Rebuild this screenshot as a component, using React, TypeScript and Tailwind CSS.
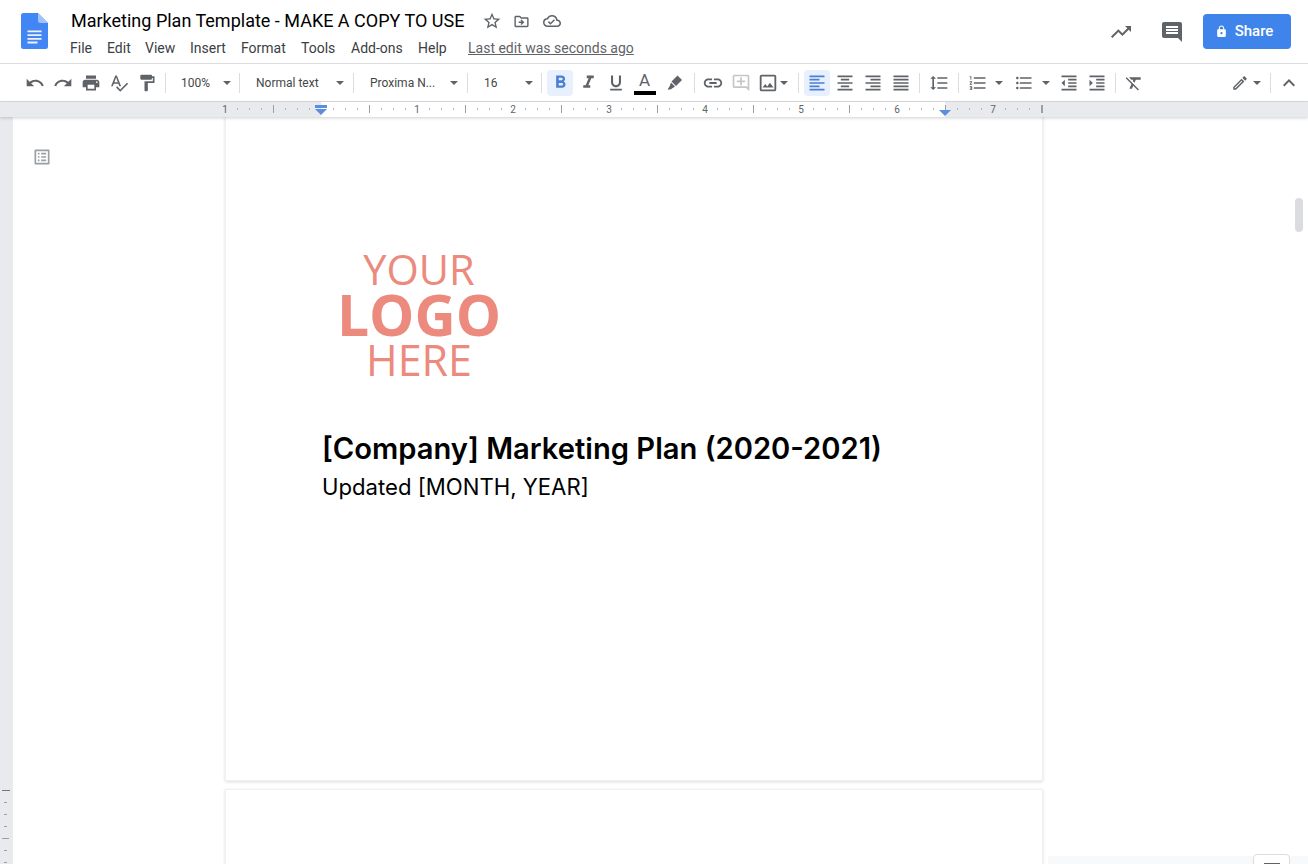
import React from "react";
import {
  MdUndo, MdRedo, MdPrint, MdSpellcheck, MdFormatPaint, MdFormatBold, MdFormatItalic, MdFormatUnderlined,
  MdLink, MdOutlineAddComment, MdOutlineImage, MdFormatAlignLeft, MdFormatAlignCenter, MdFormatAlignRight,
  MdFormatAlignJustify, MdFormatLineSpacing, MdFormatListNumbered, MdFormatListBulleted, MdFormatIndentDecrease,
  MdFormatIndentIncrease, MdFormatClear, MdOutlineEdit, MdKeyboardArrowUp, MdStarBorder, MdOutlineDriveFileMove,
  MdOutlineCloudDone, MdTrendingUp, MdComment, MdLock, MdOutlineListAlt,
} from "react-icons/md";

const roboto = "font-['Roboto','Liberation_Sans',sans-serif]";

function Caret({ className = "" }: { className?: string }) {
  return (
    <svg width="8" height="4" viewBox="0 0 8 4" className={`shrink-0 ${className}`}>
      <path d="M0 0h8L4 4z" fill="#5f6368" />
    </svg>
  );
}

function Sep() {
  return <div className="w-px h-5 bg-[#dadce0] shrink-0" />;
}

function Btn({ children, active = false, w = "w-7" }: { children: React.ReactNode; active?: boolean; w?: string }) {
  return (
    <div className={`${w} h-[26px] shrink-0 flex items-center justify-center rounded-sm ${active ? "bg-[#e8f0fe] text-[#4a7fd6]" : "text-[#5f6368]"}`}>
      {children}
    </div>
  );
}

function Drop({ label, w, pad, textW }: { label: string; w: string; pad: string; textW: string }) {
  return (
    <div className={`${w} ${pad} shrink-0 flex items-center text-[12px] text-[#444746]`}>
      <span className={`${textW} whitespace-nowrap`}>{label}</span>
      <Caret />
    </div>
  );
}

function HRuler() {
  const ticks: React.ReactNode[] = [];
  for (let x = 225; x <= 1042; x += 12) {
    const rel = (x - 225) % 96;
    if (rel === 0) continue;
    const long = (x - 225) % 48 === 0;
    ticks.push(<line key={x} x1={x + 0.5} x2={x + 0.5} y1={long ? 3 : 6} y2={long ? 11 : 8} stroke={long ? "#9aa0a6" : "#b4b8bd"} />);
  }
  const nums: [number, string][] = [[225, "1"], [417, "1"], [513, "2"], [609, "3"], [705, "4"], [801, "5"], [897, "6"], [993, "7"]];
  return (
    <svg width="1308" height="15" className="block">
      <rect width="1308" height="15" fill="#e8eaed" />
      <rect x="321" width="624" height="15" fill="#fff" />
      {ticks}
      <line x1="1042.5" x2="1042.5" y1="3" y2="11" stroke="#9aa0a6" />
      {nums.map(([x, n]) => (
        <text key={x} x={x} y="11" textAnchor="middle" fontSize="10" fontFamily="Roboto" fill="#5f6368">{n}</text>
      ))}
      <rect x="315" y="3" width="12" height="3" fill="#5b8de0" />
      <path d="M315 7h12l-6 6z" fill="#5b8de0" />
      <path d="M939 8h12l-6 6z" fill="#5b8de0" />
    </svg>
  );
}

function VRuler() {
  const ys = [790, 802, 814, 826, 838, 850, 862];
  return (
    <svg width="13" height="747" className="block shrink-0">
      <rect width="13" height="747" fill="#e8eaed" />
      {ys.map((y, i) => (
        <line key={y} x1={i === 0 || i === 4 ? 2 : 4} x2={i === 0 ? 10 : i === 4 ? 9 : 7} y1={y - 117 + 0.5} y2={y - 117 + 0.5} stroke={i === 0 ? "#777" : "#9aa0a6"} />
      ))}
    </svg>
  );
}

export default function App() {
  return (
    <div className={`relative w-[1308px] h-[864px] overflow-hidden bg-white ${roboto}`}>
      {/* Header */}
      <header className="h-[64px] border-b border-[#dadce0] flex items-start">
        <div className="w-[71px] pl-[21px] pt-[13px] shrink-0">
          <svg width="27" height="36" viewBox="0 0 27 36">
            <path d="M2.500 0H17l10 10v23.500a2.500 2.500 0 0 1-2.500 2.500h-22A2.500 2.500 0 0 1 0 33.500v-31A2.500 2.500 0 0 1 2.500 0z" fill="#4285f4" />
            <path d="M17 0l10 10h-7.500A2.500 2.500 0 0 1 17 7.500z" fill="#a1c2fa" />
            <path d="M6.500 17.500h14v1.800h-14zM6.500 21.200h14V23h-14zM6.500 24.900h14v1.800h-14zM6.500 28.600h10v1.800h-10z" fill="#f1f1f1" />
          </svg>
        </div>
        <div className="flex-1 pt-[8px]">
          <div className="flex items-center h-[26px]">
            <span className="text-[18px] leading-[26px] text-black whitespace-nowrap w-[411px]">Marketing Plan Template - MAKE A COPY TO USE</span>
            <MdStarBorder size={20} className="text-[#5f6368]" />
            <MdOutlineDriveFileMove size={17} className="text-[#5f6368] ml-[11px]" />
            <MdOutlineCloudDone size={18} className="text-[#5f6368] ml-[13px]" />
          </div>
          <div className="flex items-center h-[26px] mt-[1px] text-[14px] text-[#3c4043] -ml-px">
            <span className="w-[37px]">File</span>
            <span className="w-[38px]">Edit</span>
            <span className="w-[45px]">View</span>
            <span className="w-[51px]">Insert</span>
            <span className="w-[60px]">Format</span>
            <span className="w-[50px]">Tools</span>
            <span className="w-[67px]">Add-ons</span>
            <span className="w-[50px]">Help</span>
            <span className="text-[#5f6368] underline text-[14px]">Last edit was seconds ago</span>
          </div>
        </div>
        <div className="flex items-center pt-[14px] shrink-0 pr-[17px]">
          <MdTrendingUp size={24} className="text-[#5f6368]" />
          <MdComment size={24} className="text-[#5f6368] ml-[27px]" />
          <div className="ml-[19px] w-[88px] h-[35px] pr-[6px] rounded bg-[#3f84ea] text-white flex items-center justify-center gap-[7px] text-[15px] font-medium">
            <MdLock size={13} />
            <span>Share</span>
          </div>
        </div>
      </header>

      {/* Toolbar */}
      <div className="h-[38px] border-b border-[#dadce0] flex items-center pl-[21px] pr-[5px]">
        <Btn><MdUndo size={20} /></Btn>
        <Btn><MdRedo size={20} /></Btn>
        <Btn><MdPrint size={20} /></Btn>
        <Btn><MdSpellcheck size={20} /></Btn>
        <Btn><MdFormatPaint size={20} /></Btn>
        <div className="w-1 shrink-0" />
        <Sep />
        <Drop label="100%" w="w-[73px]" pad="pl-[15px]" textW="w-[42px]" />
        <Sep />
        <Drop label="Normal text" w="w-[113px]" pad="pl-[16px]" textW="w-[80px]" />
        <Sep />
        <Drop label="Proxima N..." w="w-[113px]" pad="pl-[16px]" textW="w-[80px]" />
        <Sep />
        <Drop label="16" w="w-[73px]" pad="pl-[16px]" textW="w-[41px]" />
        <Sep />
        <div className="w-[5px] shrink-0" />
        <Btn active w="w-[26px]"><MdFormatBold size={21} /></Btn>
        <div className="w-px shrink-0" />
        <Btn><MdFormatItalic size={21} /></Btn>
        <Btn><MdFormatUnderlined size={20} /></Btn>
        <div className="w-[29px] h-[26px] shrink-0 flex flex-col items-center justify-start relative">
          <span className="text-[17px] leading-[20px] text-[#5f6368]">A</span>
          <div className="w-[22px] h-[4px] bg-black mt-px" />
        </div>
        <div className="w-[2px] shrink-0" />
        <Btn>
          <svg width="16" height="15" viewBox="0 0 16 15">
            <path d="M10.500.5L15 5l-6 6-4.500-4.500z" fill="#5f6368" />
            <path d="M4 7.500l4 4-2.200 1.500-2.300 1.500h-3l2-3z" fill="#5f6368" />
          </svg>
        </Btn>
        <div className="w-[5px] shrink-0" />
        <Sep />
        <div className="w-[4px] shrink-0" />
        <Btn><MdLink size={22} /></Btn>
        <Btn><MdOutlineAddComment size={20} className="text-[#c4c7c5]" /></Btn>
        <Btn w="w-[26px]"><MdOutlineImage size={22} /></Btn>
        <Caret className="-ml-px" />
        <div className="w-[10px] shrink-0" />
        <Sep />
        <div className="w-[5px] shrink-0" />
        <Btn active w="w-[26px]"><MdFormatAlignLeft size={20} /></Btn>
        <div className="w-px shrink-0" />
        <Btn><MdFormatAlignCenter size={20} /></Btn>
        <Btn><MdFormatAlignRight size={20} /></Btn>
        <Btn><MdFormatAlignJustify size={20} /></Btn>
        <div className="w-1 shrink-0" />
        <Sep />
        <div className="w-[5px] shrink-0" />
        <Btn><MdFormatLineSpacing size={20} /></Btn>
        <div className="w-[5px] shrink-0" />
        <Sep />
        <div className="w-[5px] shrink-0" />
        <Btn><MdFormatListNumbered size={20} /></Btn>
        <Caret className="ml-[3px]" />
        <div className="w-[7px] shrink-0" />
        <Btn><MdFormatListBulleted size={20} /></Btn>
        <Caret className="ml-1" />
        <div className="w-[5px] shrink-0" />
        <Btn><MdFormatIndentDecrease size={20} /></Btn>
        <Btn><MdFormatIndentIncrease size={20} /></Btn>
        <div className="w-1 shrink-0" />
        <Sep />
        <div className="w-1 shrink-0" />
        <Btn><MdFormatClear size={20} /></Btn>
        <div className="flex-1" />
        <Btn><MdOutlineEdit size={18} /></Btn>
        <Caret className="-ml-[1px]" />
        <div className="w-[9px] shrink-0" />
        <Sep />
        <div className="w-[4px] shrink-0" />
        <Btn><MdKeyboardArrowUp size={24} /></Btn>
      </div>

      {/* Ruler */}
      <div className="h-[15px] shadow-[0_1px_3px_rgba(60,64,67,0.25)] relative z-10">
        <HRuler />
      </div>

      {/* Body */}
      <div className="flex h-[747px]">
        <VRuler />
        <aside className="w-[213px] shrink-0 pl-[19px] pt-[30px]">
          <MdOutlineListAlt size={20} className="text-[#9aa0a6]" />
        </aside>
        <main className="w-[816px] shrink-0 flex flex-col">
          <section className="w-[816px] h-[663px] shrink-0 bg-white shadow-[0_0_0_1px_#f0f0f0,0_1px_3px_1px_#dcdcdc] pl-[96px] pt-[130px]">
            <div className="ml-[16px] w-[162px] flex flex-col items-center text-[#ec8a7d] font-['Open_Sans',sans-serif]">
              <span className="text-[41.500px] leading-[45px] font-medium">YOUR</span>
              <span className="text-[57px] leading-[45px] font-bold">LOGO</span>
              <span className="text-[43px] leading-[45px] font-medium">HERE</span>
            </div>
            <h1 className="mt-[47px] text-[29.150px] leading-[40px] font-semibold text-black whitespace-nowrap font-['Inter',sans-serif]">[Company] Marketing Plan (2020-2021)</h1>
            <p className="text-[22.150px] leading-[36px] text-black whitespace-nowrap font-['Inter',sans-serif]">Updated [MONTH, YEAR]</p>
          </section>
          <section className="w-[816px] h-[200px] mt-[10px] shrink-0 bg-white shadow-[0_0_0_1px_#f0f0f0,0_1px_3px_1px_#dcdcdc]" />
        </main>
      </div>

      {/* Scrollbar thumb */}
      <div className="absolute left-[1295px] top-[198px] w-2 h-[34px] rounded bg-[#dadce0]" />
      {/* Bottom-right explore strip */}
      <div className="absolute left-[1048px] top-[856px] w-[260px] h-2 bg-[#f8f9fa]" />
      <div className="absolute left-[1253px] top-[854px] w-[37px] h-[12px] rounded-t border border-[#dadce0] bg-white flex justify-center">
        <div className="w-[16px] h-px mt-[8px] bg-[#5f6368]" />
      </div>
    </div>
  );
}
